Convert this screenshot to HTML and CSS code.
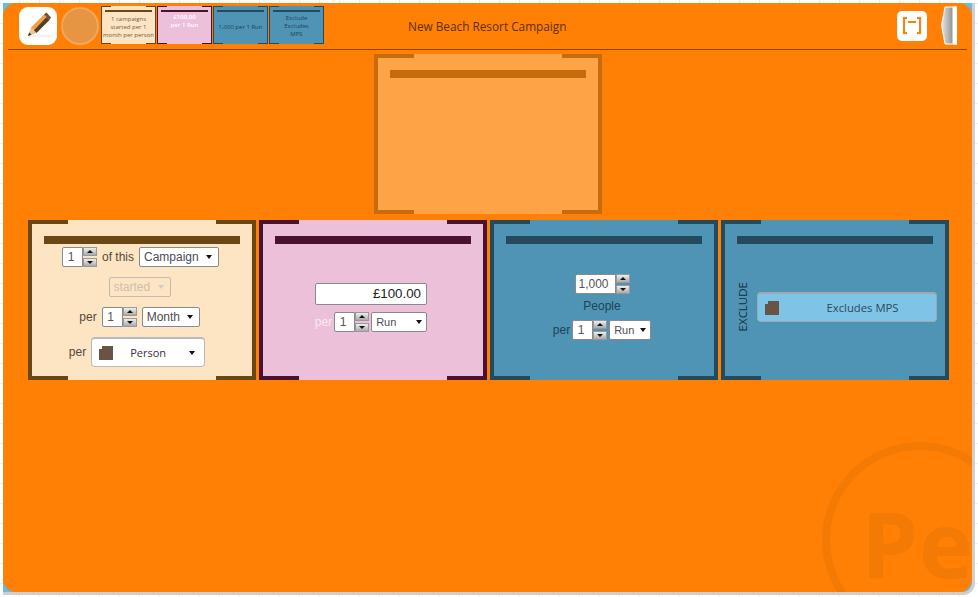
FILE: index.html
```html
<!DOCTYPE html>
<html lang="en">
<head>
    <meta charset="UTF-8">
    <meta name="viewport" content="width=device-width, initial-scale=1.0">
    <title>New Beach Resort Campaign</title>
    <link rel="stylesheet" href="styles.css">
</head>
<body>
    <div class="shell">
        <div class="stage">
            <!-- Watermark -->
            <div class="watermark"><span class="watermark-text">Pe</span></div>

            <!-- Header -->
            <header class="header">
                <button class="tile tile-edit" aria-label="Edit">
                    <svg width="38" height="38" viewBox="0 0 38 38">
                        <ellipse cx="21" cy="29" rx="13" ry="1.5" fill="#f1f1f1"/>
                        <polygon points="9,29 12,20.5 17.5,26" fill="#eec48c"/>
                        <polygon points="9,29 10.2,25.6 12.5,27.8" fill="#3a2a1c"/>
                        <polygon points="12,20.5 25,7.5 27.5,10 14.8,23.2" fill="#eaa33f"/>
                        <polygon points="14.8,23.2 27.5,10 30.5,13 17.5,26" fill="#5b3a22"/>
                        <polygon points="25,7.5 27.5,5.5 32,10.5 30.5,13" fill="#7a4f2c"/>
                    </svg>
                </button>
                <div class="status-dot"></div>
                <div class="mini-list">
                    <div class="mini mini-sand"><p>1 campaigns<br>started per 1<br>month per person</p></div>
                    <div class="mini mini-pink"><p>£100.00<br>per 1 Run</p></div>
                    <div class="mini mini-blue mini-low"><p>1,000 per 1 Run</p></div>
                    <div class="mini mini-blue"><p>Exclude<br>Excludes<br>MPS</p></div>
                </div>
                <div class="header-title">New Beach Resort Campaign</div>
                <button class="tile tile-full" aria-label="Full screen">
                    <svg width="30" height="30" viewBox="0 0 30 30">
                        <path d="M10 7H7V22H10M20 7H23V22H20M11 11H19" fill="none" stroke="#ff8004" stroke-width="2"/>
                    </svg>
                </button>
                <svg class="handle" width="16" height="39" viewBox="0 0 16 39">
                    <defs>
                        <linearGradient id="handle-fill" x1="0" x2="1" y1="0" y2="0">
                            <stop offset="0" stop-color="#e8e8e8"/>
                            <stop offset="1" stop-color="#8f8f8f"/>
                        </linearGradient>
                    </defs>
                    <path d="M0.5 19L4 1H12V38H4Z" fill="url(#handle-fill)" stroke="#fff"/>
                    <rect x="12" y="0" width="4" height="39" rx="1.5" fill="#fff"/>
                </svg>
            </header>

            <!-- Top card -->
            <div class="top-slot">
                <section class="card card-orange">
                    <div class="card-bar"></div>
                </section>
            </div>

            <!-- Card row -->
            <div class="card-row">
                <section class="card card-sand">
                    <div class="card-bar"></div>
                    <div class="card-body card-body-top">
                        <div class="field-row">
                            <div class="spin"><input class="spin-input" value="1"><div class="spin-btns"><span class="spin-up"></span><span class="spin-down"></span></div></div>
                            <span>of this</span>
                            <div class="select select-campaign"><select><option>Campaign</option></select></div>
                        </div>
                        <div class="field-row field-row-nudge">
                            <div class="select select-started select-off"><select disabled><option>started</option></select></div>
                        </div>
                        <div class="field-row field-row-nudge">
                            <span>per</span>
                            <div class="spin"><input class="spin-input" value="1"><div class="spin-btns"><span class="spin-up"></span><span class="spin-down"></span></div></div>
                            <div class="select select-month"><select><option>Month</option></select></div>
                        </div>
                        <div class="field-row field-row-person">
                            <span>per</span>
                            <button class="picker">
                                <svg class="picker-icon" width="14" height="14" viewBox="0 0 14 14"><path d="M3 0H14V14H0V3H3Z" fill="#6b5344"/></svg>
                                <span class="picker-label">Person</span>
                                <span class="picker-caret"></span>
                            </button>
                        </div>
                    </div>
                </section>

                <section class="card card-pink">
                    <div class="card-bar"></div>
                    <div class="card-body card-body-shift">
                        <input class="money" value="£100.00">
                        <div class="field-row field-row-tight field-row-money">
                            <span class="per-light">per</span>
                            <div class="spin"><input class="spin-input" value="1"><div class="spin-btns"><span class="spin-up"></span><span class="spin-down"></span></div></div>
                            <div class="select select-small select-run-wide"><select><option>Run</option></select></div>
                        </div>
                    </div>
                </section>

                <section class="card card-blue">
                    <div class="card-bar"></div>
                    <div class="card-body card-body-shift">
                        <div class="spin spin-wide"><input class="spin-input" value="1,000"><div class="spin-btns"><span class="spin-up"></span><span class="spin-down"></span></div></div>
                        <div class="people-label">People</div>
                        <div class="field-row field-row-tight">
                            <span>per</span>
                            <div class="spin"><input class="spin-input" value="1"><div class="spin-btns"><span class="spin-up"></span><span class="spin-down"></span></div></div>
                            <div class="select select-small select-run"><select><option>Run</option></select></div>
                        </div>
                    </div>
                </section>

                <section class="card card-blue">
                    <div class="card-bar"></div>
                    <div class="card-body card-body-exclude">
                        <div class="exclude-label">EXCLUDE</div>
                        <button class="picker picker-blue">
                            <svg class="picker-icon" width="14" height="14" viewBox="0 0 14 14"><path d="M3 0H14V14H0V3H3Z" fill="#6b5344"/></svg>
                            <span class="picker-label">Excludes MPS</span>
                        </button>
                    </div>
                </section>
            </div>
        </div>
    </div>
</body>
</html>
```

FILE: styles.css
```css
* {
    box-sizing: border-box;
    margin: 0;
    padding: 0;
}

html, body {
    height: 597px;
    overflow: hidden;
}

body {
    font-family: "Liberation Sans", Arial, sans-serif;
    font-size: 12px;
    background-color: #fff;
    background-image:
        linear-gradient(#eee 1px, transparent 1px),
        linear-gradient(90deg, #eee 1px, transparent 1px);
    background-size: 20px 20px;
    background-position: 19px 3px;
    padding: 3px 3px 2px;
}

.shell {
    height: 592px;
    background: #5fbfec;
    border-right: 3px solid #cfcfcf;
    border-bottom: 3px solid #cfcfcf;
    border-bottom-right-radius: 12px;
}

.stage {
    position: relative;
    height: 100%;
    background: #ff8004;
    border-radius: 13px;
    overflow: hidden;
}

/* Watermark */
.watermark {
    position: absolute;
    left: 819px;
    top: 439px;
    width: 196px;
    height: 196px;
    border: 8px solid #f27a05;
    border-radius: 50%;
}

.watermark-text {
    position: absolute;
    left: 31px;
    top: 30px;
    font-family: "Open Sans", sans-serif;
    font-size: 92px;
    font-weight: 700;
    line-height: 125px;
    color: #f27a05;
}

/* Header */
.header {
    position: relative;
    display: flex;
    align-items: center;
    height: 47px;
    margin: 0 5px;
    padding: 0 10px 1px 11px;
    border-bottom: 1px solid #8a4300;
}

.tile {
    display: block;
    flex: none;
    border: none;
    background: #fff;
}

.tile-edit {
    width: 38px;
    height: 38px;
    border-radius: 9px;
}

.tile-full {
    width: 30px;
    height: 30px;
    margin-left: auto;
    border-radius: 5px;
}

.tile svg {
    display: block;
}

.status-dot {
    flex: none;
    width: 38px;
    height: 38px;
    margin-left: 4px;
    background: #e69642;
    border: 2px solid #f2a75c;
    border-radius: 50%;
}

.mini-list {
    flex: none;
    display: flex;
    gap: 1px;
    margin-left: 2px;
    margin-top: -2px;
}

.mini {
    width: 55px;
    height: 38px;
    padding: 5px 3px 0;
    font-family: "Open Sans", sans-serif;
    font-size: 6px;
    line-height: 8px;
    text-align: center;
    background:
        linear-gradient(var(--edge), var(--edge)) 0 0 / 1px 100% no-repeat,
        linear-gradient(var(--edge), var(--edge)) 100% 0 / 1px 100% no-repeat,
        linear-gradient(var(--edge), var(--edge)) 0 0 / 10px 1px no-repeat,
        linear-gradient(var(--edge), var(--edge)) 100% 0 / 10px 1px no-repeat,
        linear-gradient(var(--edge), var(--edge)) 0 100% / 10px 1px no-repeat,
        linear-gradient(var(--edge), var(--edge)) 100% 100% / 10px 1px no-repeat,
        linear-gradient(var(--edge), var(--edge)) 50% 4px / 47px 2px no-repeat,
        var(--fill);
}

.mini p {
    white-space: nowrap;
    margin-left: -2px;
    margin-right: -2px;
    color: var(--ink);
}

.mini-sand {
    --edge: #6b4716;
    --fill: #fde5c4;
    --ink: #6b5c48;
    padding-top: 9px;
}

.mini-pink {
    --edge: #4a122f;
    --fill: #ebc0d8;
    --ink: #fff;
    padding-top: 7px;
    font-weight: 600;
}

.mini-blue {
    --edge: #254a5b;
    --fill: #4f94b5;
    --ink: #1f4256;
    padding-top: 8px;
}

.mini-low {
    padding-top: 17px;
}

.header-title {
    flex: none;
    margin-left: 84px;
    font-family: "Open Sans", sans-serif;
    font-size: 11.8px;
    color: #5a3205;
    white-space: nowrap;
}

.handle {
    display: block;
    flex: none;
    margin-left: 14px;
    margin-top: -1px;
}

/* Cards */
.top-slot {
    display: flex;
    justify-content: center;
    padding-left: 1px;
    margin-top: 4px;
}

.card-row {
    display: flex;
    gap: 3px;
    margin-top: 6px;
    padding-left: 25px;
}

.card {
    display: flex;
    flex-direction: column;
    width: 228px;
    height: 160px;
    padding: 16px 16px 10px;
    color: var(--ink);
    background:
        linear-gradient(var(--edge), var(--edge)) 0 0 / 4px 100% no-repeat,
        linear-gradient(var(--edge), var(--edge)) 100% 0 / 4px 100% no-repeat,
        linear-gradient(var(--edge), var(--edge)) 0 0 / 40px 4px no-repeat,
        linear-gradient(var(--edge), var(--edge)) 100% 0 / 40px 4px no-repeat,
        linear-gradient(var(--edge), var(--edge)) 0 100% / 40px 4px no-repeat,
        linear-gradient(var(--edge), var(--edge)) 100% 100% / 40px 4px no-repeat,
        var(--fill);
}

.card-orange {
    --edge: #c76c0c;
    --fill: #ffa347;
}

.card-sand {
    --edge: #6b4716;
    --fill: #fde5c4;
    --ink: #54483a;
}

.card-pink {
    --edge: #4a122f;
    --fill: #ebc0d8;
    --ink: #333;
}

.card-blue {
    --edge: #254a5b;
    --fill: #4f94b5;
    --ink: #1f4256;
}

.card-bar {
    flex: none;
    height: 8px;
    background: var(--edge);
}

.card-body {
    flex: 1;
    display: flex;
    flex-direction: column;
    align-items: center;
    justify-content: center;
}

.card-body-shift {
    padding-right: 4px;
}

.card-body-top {
    justify-content: flex-start;
    gap: 10px;
    padding: 3px 3px 0 0;
}

.field-row {
    display: flex;
    align-items: center;
    gap: 5px;
    height: 20px;
}

.field-row-nudge {
    margin-right: 2px;
}

.field-row-person {
    height: 30px;
    margin-right: 7px;
}

.field-row-tight {
    gap: 2px;
}

.field-row-money {
    margin-top: 7px;
}

.per-light {
    color: #fbe9f3;
}

/* Inputs */
.spin {
    flex: none;
    display: flex;
    width: 35px;
    height: 20px;
}

.spin-wide {
    width: 55px;
}

.spin-input {
    flex: 1;
    width: 0;
    height: 20px;
    padding-right: 3px;
    font: inherit;
    color: #555;
    text-align: center;
    background: #fff;
    border: 1px solid #8a8a8a;
    border-radius: 2px 0 0 2px;
}

.spin-btns {
    flex: none;
    display: flex;
    flex-direction: column;
    justify-content: space-between;
    width: 14px;
}

.spin-up,
.spin-down {
    position: relative;
    display: block;
    height: 9px;
    background: linear-gradient(#eee, #aaa);
    border: 1px solid #999;
}

.spin-up::after,
.spin-down::after {
    content: "";
    position: absolute;
    left: 3px;
    top: 2px;
    border-left: 3px solid transparent;
    border-right: 3px solid transparent;
}

.spin-up::after {
    border-bottom: 3px solid #111;
}

.spin-down::after {
    border-top: 3px solid #111;
}

.select {
    position: relative;
    flex: none;
    height: 20px;
}

.select::after {
    content: "";
    position: absolute;
    right: 7px;
    top: 8px;
    border-left: 3px solid transparent;
    border-right: 3px solid transparent;
    border-top: 4px solid #111;
    pointer-events: none;
}

.select select {
    display: block;
    width: 100%;
    height: 100%;
    padding-left: 4px;
    font: inherit;
    color: #4c4c55;
    background: #fff;
    border: 1px solid #8a8a8a;
    border-radius: 2px;
    appearance: none;
}

.select-campaign {
    width: 80px;
}

.select-started {
    width: 62px;
}

.select-month {
    width: 58px;
}

.select-small {
    font-size: 11px;
}

.select-small::after {
    right: 5px;
}

.select-run-wide {
    width: 56px;
}

.select-run {
    width: 42px;
}

.select-off::after {
    border-top-color: #ccc;
}

.select-off select {
    color: #b5b0a8;
    background: #fde5c4;
    border-color: #aaa;
}

.money {
    width: 112px;
    height: 22px;
    padding-right: 5px;
    font: 13.3px "Liberation Sans", Arial, sans-serif;
    color: #222;
    text-align: right;
    background: #fff;
    border: 1px solid #8a8a8a;
    border-radius: 2px;
}

.people-label {
    margin: 5px 0 7px;
    line-height: 14px;
}

/* Pickers */
.picker {
    display: flex;
    align-items: center;
    position: relative;
    width: 114px;
    height: 30px;
    padding-left: 7px;
    font-family: "Open Sans", sans-serif;
    font-size: 11px;
    color: #333;
    background: #fff;
    border: 1px solid #bbb;
    border-top-width: 2px;
    border-radius: 4px;
}

.picker-icon {
    flex: none;
}

.picker-label {
    margin-left: 17px;
}

.picker-caret {
    position: absolute;
    right: 9px;
    top: 12px;
    border-left: 3px solid transparent;
    border-right: 3px solid transparent;
    border-top: 4px solid #111;
}

.card-body-exclude {
    flex-direction: row;
    justify-content: flex-start;
    margin-right: -4px;
}

.exclude-label {
    writing-mode: vertical-rl;
    transform: rotate(180deg);
    width: 12px;
    margin-right: 8px;
    font-family: "Open Sans", sans-serif;
    font-size: 11.5px;
    line-height: 12px;
    color: #14303e;
}

.picker-blue {
    flex: 1;
    background: #7fc4e6;
    border-color: #9aa9b2;
    color: #2b4a5c;
}

.picker-blue .picker-label {
    flex: 1;
    margin-left: 0;
    padding-left: 10px;
    font-size: 11.3px;
    text-align: center;
}
```
